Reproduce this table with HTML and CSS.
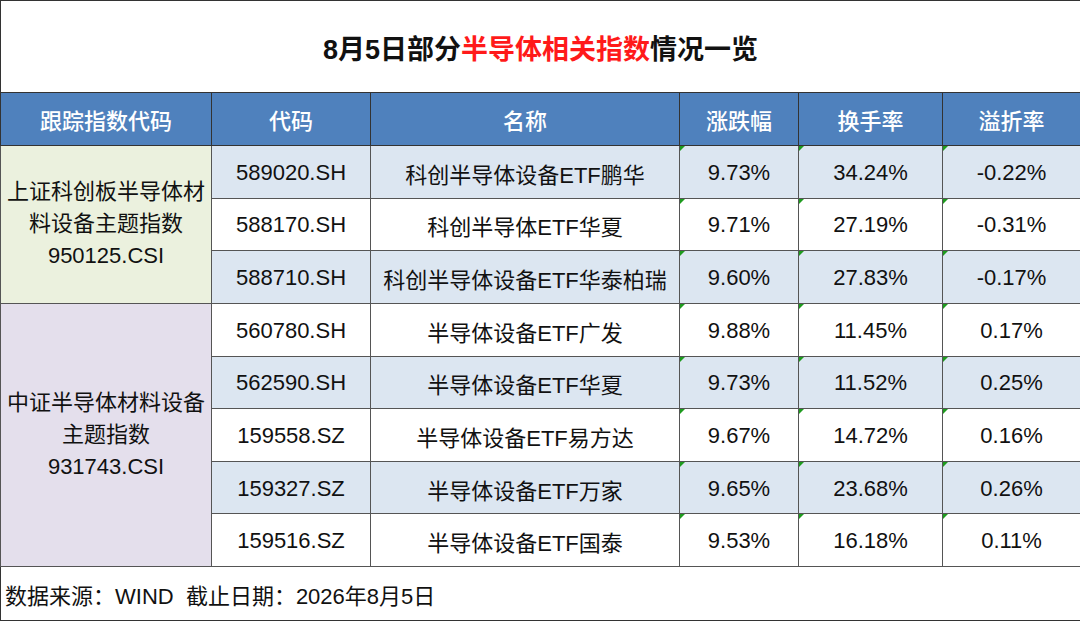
FILE: index.html
```html
<!DOCTYPE html>
<html lang="zh">
<head>
<meta charset="utf-8">
<title>8月5日部分半导体相关指数情况一览</title>
<link rel="stylesheet" href="styles.css">
</head>
<body>
<table class="sheet">
  <colgroup>
    <col class="c1"><col class="c2"><col class="c3"><col class="c4"><col class="c5"><col class="c6">
  </colgroup>
  <tr class="title-row">
    <td colspan="6" class="title">8月5日部分<span class="red">半导体相关指数</span>情况一览</td>
  </tr>
  <tr class="head-row">
    <th>跟踪指数代码</th><th>代码</th><th>名称</th><th>涨跌幅</th><th>换手率</th><th>溢折率</th>
  </tr>
  <tr class="row blue">
    <td rowspan="3" class="group green">上证科创板半导体材<br>料设备主题指数<br>950125.CSI</td>
    <td>589020.SH</td><td>科创半导体设备ETF鹏华</td><td class="flag">9.73%</td><td class="flag">34.24%</td><td class="flag">-0.22%</td>
  </tr>
  <tr class="row">
    <td>588170.SH</td><td>科创半导体ETF华夏</td><td class="flag">9.71%</td><td class="flag">27.19%</td><td class="flag">-0.31%</td>
  </tr>
  <tr class="row blue">
    <td>588710.SH</td><td>科创半导体设备ETF华泰柏瑞</td><td class="flag">9.60%</td><td class="flag">27.83%</td><td class="flag">-0.17%</td>
  </tr>
  <tr class="row">
    <td rowspan="5" class="group purple">中证半导体材料设备<br>主题指数<br>931743.CSI</td>
    <td>560780.SH</td><td>半导体设备ETF广发</td><td class="flag">9.88%</td><td class="flag">11.45%</td><td class="flag">0.17%</td>
  </tr>
  <tr class="row blue">
    <td>562590.SH</td><td>半导体设备ETF华夏</td><td class="flag">9.73%</td><td class="flag">11.52%</td><td class="flag">0.25%</td>
  </tr>
  <tr class="row">
    <td>159558.SZ</td><td>半导体设备ETF易方达</td><td class="flag">9.67%</td><td class="flag">14.72%</td><td class="flag">0.16%</td>
  </tr>
  <tr class="row blue">
    <td>159327.SZ</td><td>半导体设备ETF万家</td><td class="flag">9.65%</td><td class="flag">23.68%</td><td class="flag">0.26%</td>
  </tr>
  <tr class="row">
    <td>159516.SZ</td><td>半导体设备ETF国泰</td><td class="flag">9.53%</td><td class="flag">16.18%</td><td class="flag">0.11%</td>
  </tr>
  <tr class="foot-row">
    <td colspan="6" class="foot">数据来源：WIND&nbsp; 截止日期：2026年8月5日</td>
  </tr>
</table>
</body>
</html>
```

FILE: styles.css
```css
html, body {
  margin: 0;
  padding: 0;
  background: #ffffff;
}

body {
  width: 1080px;
  height: 621px;
  overflow: hidden;
  font-family: "Liberation Sans", "Noto Sans CJK SC", sans-serif;
  color: #111111;
}

.sheet {
  width: 1080px;
  border-collapse: collapse;
  table-layout: fixed;
  border: 1px solid #333333;
}

.c1 { width: 211px; }
.c2 { width: 159px; }
.c3 { width: 309px; }
.c4 { width: 119px; }
.c5 { width: 144px; }
.c6 { width: 138px; }

.sheet td,
.sheet th {
  border: 1px solid #555555;
  padding: 0 4px;
  text-align: center;
  vertical-align: middle;
  font-size: 22px;
  font-weight: 400;
  white-space: nowrap;
}

.title-row { height: 92px; }

.sheet .title {
  font-size: 27px;
  font-weight: 700;
  color: #111111;
  padding-top: 2px;
  border-color: #333333;
}

.red { color: #ff1a1a; }

.head-row { height: 53px; }

.sheet .head-row th {
  background: #4f81bd;
  color: #ffffff;
  font-weight: 500;
  border-color: #333333;
}

.row { height: 52.65px; }

.row td { background: #ffffff; padding-top: 2px; }
.row.blue td { background: #dce6f1; }

.sheet .group {
  line-height: 32px;
  padding: 0 4px;
}

.row td.green { background: #ebf1de; }
.row td.purple { background: #e4dfec; }

.flag { position: relative; }

.flag::before {
  content: "";
  position: absolute;
  top: 0;
  left: 0;
  width: 0;
  height: 0;
  border-top: 5px solid #1e9b1e;
  border-right: 5px solid transparent;
}

.foot-row { height: 54px; }

.sheet .foot {
  text-align: left;
  padding-left: 4px;
  border-color: #333333;
}
```
